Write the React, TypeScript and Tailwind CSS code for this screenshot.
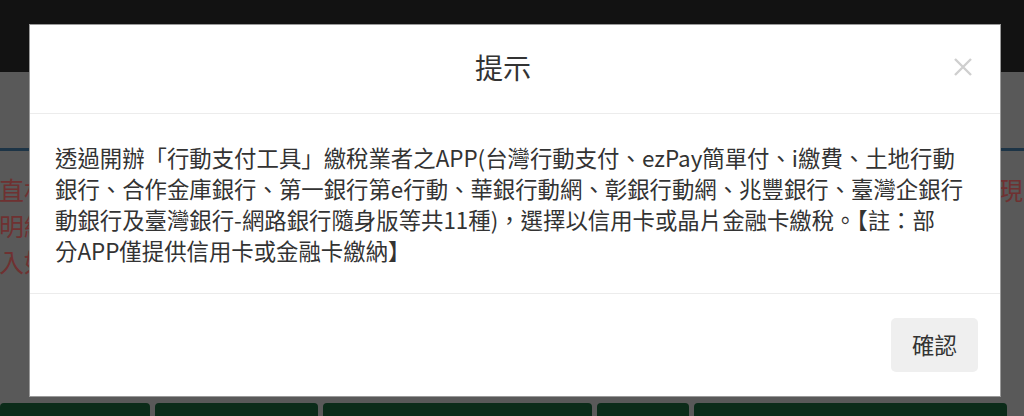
import React from "react";

const font = { fontFamily: '"Noto Sans CJK TC", "Noto Sans", sans-serif' };

function Backdrop() {
  const tabs = [
    "w-[150px]",
    "w-[163px]",
    "w-[269px]",
    "w-[92px]",
    "w-[313px]",
  ];
  return (
    <div className="flex h-full flex-col">
      <div className="h-[72px] bg-[#121212]" />
      <div className="flex-1 pt-[76px]">
        <div className="h-[3px] bg-[#1d3446]" />
        <div className="flex justify-between pt-[20px] text-[25px] leading-[36px] text-[#6f3131]">
          <div className="-ml-[1px] whitespace-nowrap">
            <div>直林</div>
            <div>明細</div>
            <div>入如</div>
          </div>
          <div className="whitespace-nowrap pr-[1px]">
            <div>現</div>
          </div>
        </div>
      </div>
      <div className="flex h-[13px] gap-[5px]">
        {tabs.map((w, i) => (
          <div key={i} className={`${w} rounded-t-[4px] bg-[#0b2b19]`} />
        ))}
      </div>
    </div>
  );
}

function Modal() {
  return (
    <div className="absolute left-[29px] top-[24px] flex w-[972px] flex-col border border-[#9a9a9a] bg-white">
      <div className="relative flex h-[89px] items-center justify-center border-b border-[#ececec] pr-[24px]">
        <h4 className="-mt-[4px] text-[28px] font-normal leading-none text-[#333]">提示</h4>
        <button className="absolute right-[27px] top-[32px] text-[#cfcfcf]">
          <svg width="20" height="20" viewBox="0 0 20 20" fill="none" stroke="currentColor" strokeWidth="2.4">
            <path d="M2 2 L18 18 M18 2 L2 18" />
          </svg>
        </button>
      </div>
      <div className="whitespace-nowrap px-[25px] pb-[27px] pt-[28px] text-[22.4px] leading-[31px] text-[#333]">
        透過開辦「行動支付工具」繳稅業者之APP(台灣行動支付、ezPay簡單付、i繳費、土地行動
        <br />
        銀行、合作金庫銀行、第一銀行第e行動、華銀行動網、彰銀行動網、兆豐銀行、臺灣企銀行
        <br />
        動銀行及臺灣銀行-網路銀行隨身版等共11種)，選擇以信用卡或晶片金融卡繳稅。【註：部
        <br />
        分APP僅提供信用卡或金融卡繳納】
      </div>
      <div className="flex justify-end border-t border-[#ececec] px-[22px] py-[24px]">
        <button className="h-[54px] w-[87px] rounded-[5px] bg-[#efefef] text-[22.4px] text-[#333]">確認</button>
      </div>
    </div>
  );
}

export default function App() {
  return (
    <div className="relative h-[416px] w-[1024px] overflow-hidden bg-[#595959]" style={font}>
      <Backdrop />
      <Modal />
    </div>
  );
}
